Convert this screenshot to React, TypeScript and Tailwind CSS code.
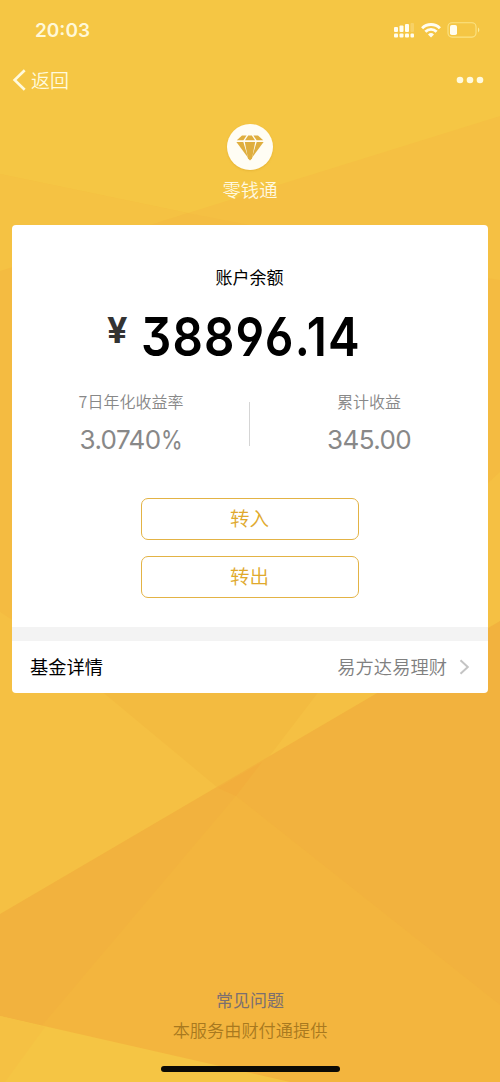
import type { ReactNode } from "react";

interface StatProps
{
  label: string;
  value: ReactNode;
}

function Backdrop()
{
  return (
    <svg viewBox="0 0 500 1082" className="absolute inset-0 h-[1082px] w-[500px]" aria-hidden="true">
      <rect width="500" height="1082" fill="#f5c043" />
      <polygon points="0,0 500,0 500,116 188,213 0,174" fill="#f5c644" />
      <polygon points="0,174 188,213 150,225 0,271" fill="#f5c243" />
      <polygon points="188,213 250,225 150,225" fill="#f4bd42" />
      <polygon points="0,271 150,225 500,280 500,472 320,640 20,625 0,612" fill="#f4bb41" />
      <polygon points="100,690 320,690 262,766 218,788" fill="#f3bb40" />
      <polygon points="500,621 0,914 0,1082 500,1082" fill="#f2b23e" />
      <polygon points="236,796 500,1005 500,1082 5,1082 40,1028" fill="#f3b53e" />
      <polygon points="218,788 262,762 236,796" fill="#f2ae3c" />
      <polygon points="0,1016 290,1082 0,1082" fill="#f5c544" />
      <polygon points="0,1016 45,1027 5,1082 0,1082" fill="#f5c143" />
    </svg>
  );
}

function StatusIcons()
{
  return (
    <div className="flex items-center">
      <svg width="20" height="15" viewBox="0 0 20 15" fill="#fffdf0">
        <rect x="0" y="4" width="4" height="5" rx="1" />
        <rect x="5.5" y="2.5" width="4" height="6.5" rx="1" />
        <rect x="11" y="1" width="4" height="8" rx="1" />
        <rect x="16.5" y="0" width="3.5" height="9" rx="1" opacity=".2" />
        <rect x="0" y="10.5" width="4" height="4" rx="1" />
        <rect x="5.5" y="10.5" width="4" height="4" rx="1" />
        <rect x="11" y="10.5" width="4" height="4" rx="1" />
        <rect x="16.5" y="10.5" width="3.5" height="4" rx="1" />
      </svg>
      <svg className="ml-[7px]" width="20" height="15" viewBox="0 0 20 15" fill="none" stroke="#fffdf0" strokeWidth="2.9">
        <path d="M1.1 5.2a12.6 12.6 0 0 1 17.8 0" />
        <path d="M4.4 8.7a8 8 0 0 1 11.2 0" />
        <path d="M10 14.4l-3-3a4.3 4.3 0 0 1 6 0z" fill="#fffdf0" stroke="none" />
      </svg>
      <svg className="ml-[6px]" width="33" height="16" viewBox="0 0 33 16" fill="none">
        <rect x="1" y=".7" width="28" height="14.4" rx="4" stroke="#fff2a8" strokeOpacity=".65" strokeWidth="1.1" />
        <rect x="3" y="3" width="7" height="10" rx="1.8" fill="#fffdf0" />
        <path d="M31 5.6v4.8c1.8-.8 1.8-4 0-4.8z" fill="#fff2a8" fillOpacity=".8" />
      </svg>
    </div>
  );
}

function Diamond()
{
  return (
    <svg className="mt-px" width="28" height="26" viewBox="0 0 28 26" fill="#dfae3e">
      <path d="M6 .5h4.6L7.4 5.3H0.8z" />
      <path d="M12.2 .5h3.6L19 5.3H9z" />
      <path d="M17.4 .5H22l5.2 4.8h-6.6z" />
      <path d="M.4 7H7.3l4.9 16z" />
      <path d="M8.8 7h10.4L16 23.6 14 25.4l-2-1.8z" />
      <path d="M20.7 7h6.9L15.8 23z" />
    </svg>
  );
}

function Stat({ label, value }: StatProps)
{
  return (
    <div className="flex flex-1 flex-col items-center text-[#888888]">
      <div className="text-[16px] leading-6 font-[350]">{ label }</div>
      <div className="mt-[11px] font-['Inter'] text-[26px] leading-8 tracking-[-0.6px]">{ value }</div>
    </div>
  );
}

function ActionButton({ children }: { children: ReactNode })
{
  return (
    <button className="h-[42px] w-[218px] rounded-[7px] border-[1.5px] border-[#e3b345] pr-px pb-[2px] text-[19.5px] leading-none font-[350] text-[#e0a92c]">
      { children }
    </button>
  );
}

export default function App()
{
  return (
    <div className="relative h-[1082px] w-[500px] overflow-hidden font-['Noto_Sans_CJK_SC',sans-serif]">
      <Backdrop />

      <div className="relative flex h-full flex-col">
        <div className="flex h-[60px] items-center justify-between pr-[20px] pl-[35px]">
          <div className="mt-[2px] font-['Inter'] text-[19px] font-semibold text-[#fff8d8]">20:03</div>
          <StatusIcons />
        </div>

        <div className="flex h-10 items-center justify-between pr-4 pl-3 text-[#fffadd]">
          <div className="flex items-center">
            <svg width="14" height="22" viewBox="0 0 14 22" fill="none" stroke="currentColor" strokeWidth="2.6">
              <path d="M12.7 1.2L2.6 11l10.1 9.8" />
            </svg>
            <span className="mb-[2px] ml-[5px] text-[19px] leading-none font-[350]">返回</span>
          </div>
          <svg width="28" height="8" viewBox="0 0 28 8" fill="currentColor">
            <circle cx="4" cy="4" r="3.3" />
            <circle cx="14" cy="4" r="3.3" />
            <circle cx="24" cy="4" r="3.3" />
          </svg>
        </div>

        <div className="mt-6 flex flex-col items-center">
          <div className="flex size-[46px] items-center justify-center rounded-full bg-[#fffdf4] shadow-[0_1px_2px_rgba(200,140,20,0.3)]">
            <Diamond />
          </div>
          <div className="mt-[6px] text-[18.3px] leading-[26px] font-[350] text-[#fff9e0]">零钱通</div>
        </div>

        <div className="mx-3 mt-[23px] h-[468px] rounded bg-white">
          <div className="flex h-[402px] flex-col items-center">
            <div className="mt-[39px] mr-px text-[17px] leading-[26px] text-black">账户余额</div>
            <div className="mt-[17px] mr-[33px] flex h-[60px] w-[251px] items-start">
              <span className="mt-[3px] -ml-px w-[34px] shrink-0 text-[36px] leading-[40px] font-bold text-[#333333] font-['Inter']">¥</span>
              <span className="shrink-0 origin-left scale-x-[0.88] font-['Inter'] text-[54px] leading-[60px] font-semibold tracking-[1.3px] text-black [font-feature-settings:'cv03','cv04','cv09']">
                38896.14
              </span>
            </div>
            <div className="mt-[22px] flex w-full">
              <Stat
                label="7日年化收益率"
                value={ <>3.0740<span className="-mr-[3px] inline-block origin-left scale-x-[0.85]">%</span></> } />
              <div className="relative right-px mt-[13px] -mr-px h-[44px] w-px bg-[#d5d5d5]" />
              <Stat label="累计收益" value="345.00" />
            </div>
            <div className="mt-[42px] flex flex-col gap-4">
              <ActionButton>转入</ActionButton>
              <ActionButton>转出</ActionButton>
            </div>
          </div>
          <div className="h-[14px] bg-[#f3f3f3]" />
          <div className="flex h-[52px] items-center justify-between pr-[18px] pl-[18px] text-[18.3px]">
            <span className="text-black">基金详情</span>
            <div className="flex items-center font-[350] text-[#808080]">
              <span>易方达易理财</span>
              <svg className="ml-[12px]" width="11" height="16" viewBox="0 0 11 16" fill="none" stroke="#c4c4c4" strokeWidth="2">
                <path d="M1.5 1.2L8.8 8l-7.3 6.8" />
              </svg>
            </div>
          </div>
        </div>

        <div className="mt-[294px] flex flex-col items-center">
          <div className="text-[17px] leading-[26px] text-[#7b6f70]">常见问题</div>
          <div className="mt-[4px] text-[17.2px] leading-[26px] font-[350] text-[#a8791f]">本服务由财付通提供</div>
          <div className="mt-[23px] h-[6px] w-[179px] rounded-full bg-[#0b0a05]" />
        </div>
      </div>
    </div>
  );
}
